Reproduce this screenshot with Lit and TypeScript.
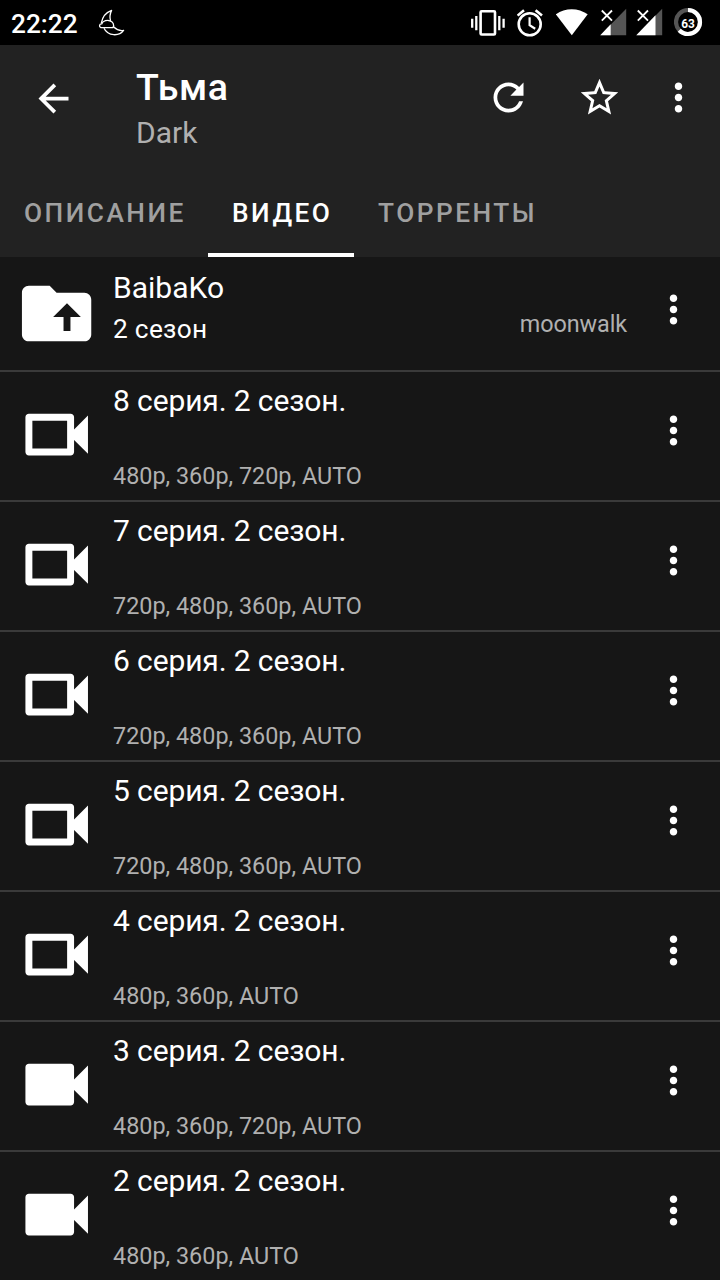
import { LitElement, html, svg, css } from "lit";
import { customElement, property } from "lit/decorators.js";

const GLYPHS: Record<string, string> = {
  back: "M20 11H7.83l5.59-5.59L12 4l-8 8 8 8 1.41-1.41L7.83 13H20v-2z",
  refresh:
    "M17.65 6.35C16.2 4.9 14.21 4 12 4c-4.42 0-7.99 3.58-7.99 8s3.57 8 7.99 8c3.73 0 6.84-2.55 7.73-6h-2.08c-.82 2.33-3.04 4-5.65 4-3.31 0-6-2.69-6-6s2.69-6 6-6c1.66 0 3.14.69 4.22 1.78L13 11h7V4l-2.35 2.35z",
  star: "M22 9.24l-7.19-.62L12 2 9.19 8.63 2 9.24l5.46 4.73L5.82 21 12 17.27 18.18 21l-1.63-7.03L22 9.24zM12 15.4l-3.76 2.27 1-4.28-3.32-2.88 4.38-.38L12 6.1l1.71 4.04 4.38.38-3.32 2.88 1 4.28L12 15.4z",
  more: "M12 8c1.1 0 2-.9 2-2s-.9-2-2-2-2 .9-2 2 .9 2 2 2zm0 2c-1.1 0-2 .9-2 2s.9 2 2 2 2-.9 2-2-.9-2-2-2zm0 6c-1.1 0-2 .9-2 2s.9 2 2 2 2-.9 2-2-.9-2-2-2z",
  folderUp:
    "M20 6h-8l-2-2H4c-1.1 0-2 .9-2 2v12c0 1.1.9 2 2 2h16c1.1 0 2-.9 2-2V8c0-1.1-.9-2-2-2zM16 13v4h-2v-4h-3l4-4 4 4h-3z",
  cam: "M17 10.5V7c0-.55-.45-1-1-1H4c-.55 0-1 .45-1 1v10c0 .55.45 1 1 1h12c.55 0 1-.45 1-1v-3.5l4 4v-11l-4 4z",
  camOutline:
    "M15 8v8H5V8h10m1-2H4c-.55 0-1 .45-1 1v10c0 .55.45 1 1 1h12c.55 0 1-.45 1-1v-3.5l4 4v-11l-4 4V7c0-.55-.45-1-1-1z",
};

@customElement("ui-icon")
export class UiIcon extends LitElement {
  @property() name = "more";
  static styles = css`
    :host { display: block; flex: none; width: 45px; height: 45px; }
    svg { display: block; width: 100%; height: 100%; fill: #fff; }
  `;
  render() {
    return html`<svg viewBox="0 0 24 24"><path fill-rule="evenodd" d=${GLYPHS[this.name]}></path></svg>`;
  }
}

@customElement("status-bar")
export class StatusBar extends LitElement {
  static styles = css`
    :host { display: flex; height: 45px; background: #000; color: #fff; }
    .clock { padding: 8px 0 0 11px; width: 97px; box-sizing: border-box; font-size: 26.25px; line-height: 32px; font-weight: 500; white-space: nowrap; }
    .space { flex: 1; }
    svg { display: block; flex: none; height: 45px; }
    .line { fill: none; stroke: #fff; }
    .num { font: 700 13px Roboto, sans-serif; fill: #fff; }
  `;
  private signal(w: number) {
    return svg`
      <path d="M0.3 35.2H26.2V8.8z" fill="#555"></path>
      <path d="M0.3 35.2H${w}V${35.2 - w * 1.02}z" fill="#fff"></path>
      <path class="line" stroke-width="1.8" d="M1.8 10.5l10.2 10.2M12 10.5l-10.2 10.2"></path>`;
  }
  render() {
    return html`
      <div class="clock">22:22</div>
      <svg width="30" viewBox="97 0 30 45">
        <g class="line" stroke-width="1.3" stroke-linejoin="round">
          <path d="M101.3 23.2C102.3 17.5 105.6 12.6 111.6 10.4C109.8 14 109.6 17.6 110.6 21.2"></path>
          <path d="M104.3 27.7H100.9C98.7 26.6 99.3 23.6 101.8 23.9C102.6 20.6 108 19.6 109.8 20.9C113 21.4 114.6 25 113 27.7H104"></path>
          <path d="M104 28.3C108 36.6 119.4 36.4 123.6 30.4C119.6 31.2 116.6 29.8 113.4 26.8"></path>
        </g>
      </svg>
      <div class="space"></div>
      <svg width="47" viewBox="470 0 47 45">
        <rect class="line" x="480.6" y="11.3" width="14.4" height="23.2" rx="1" stroke-width="2.6"></rect>
        <path class="line" stroke-width="2.3" d="M472.2 18.7v9M476.3 16v14.2M499.3 16v14.2M503.6 18.7v9"></path>
      </svg>
      <svg width="39" viewBox="517 0 39 45">
        <circle class="line" cx="529.7" cy="24.3" r="11" stroke-width="2.6"></circle>
        <path class="line" stroke-width="2.2" d="M529.6 17.2v8l5.6 3.5"></path>
        <path class="line" stroke-width="2.6" d="M517.6 15.6l6.4-5.3M535.6 10.3l6.4 5.3"></path>
      </svg>
      <svg width="44" viewBox="556 0 44 45">
        <path fill="#fff" d="M555.8 14.3C565 7.4 578.4 7.4 587.7 14.3L571.8 35.2z"></path>
      </svg>
      <svg width="36" viewBox="0 0 36 45">${this.signal(10.7)}</svg>
      <svg width="38" viewBox="0 0 38 45">${this.signal(19.5)}</svg>
      <svg width="46" viewBox="674 0 46 45">
        <circle cx="688" cy="22" r="12" fill="none" stroke="#555" stroke-width="4.2"></circle>
        <circle cx="688" cy="22" r="12" fill="none" stroke="#fff" stroke-width="4.2" pathLength="100"
          stroke-dasharray="63 37" transform="rotate(-90 688 22)"></circle>
        <text class="num" x="681.3" y="27.7" textLength="13.6" lengthAdjust="spacingAndGlyphs">63</text>
      </svg>
    `;
  }
}

@customElement("video-row")
export class VideoRow extends LitElement {
  @property() heading = "";
  @property() quality = "";
  @property({ type: Boolean }) seen = false;
  static styles = css`
    :host { display: flex; height: 130px; box-sizing: border-box; border-bottom: 2px solid #3a3a3a; }
    .cam { width: 83.4px; height: 83.4px; margin: 20.6px 0 0 14.6px; }
    .body { flex: 1; padding: 11px 0 0 15px; display: flex; flex-direction: column; gap: 43px; white-space: nowrap; }
    .heading { font-size: 30px; line-height: 36px; letter-spacing: -0.12px; color: #fff; }
    .quality { font-size: 23.4px; line-height: 28px; color: #b0b0b0; }
    .more { margin: 36px 24px 0 0; }
  `;
  render() {
    return html`
      <ui-icon class="cam" name=${this.seen ? "cam" : "camOutline"}></ui-icon>
      <div class="body">
        <div class="heading">${this.heading}</div>
        <div class="quality">${this.quality}</div>
      </div>
      <ui-icon class="more"></ui-icon>
    `;
  }
}

@customElement("app-root")
export class AppRoot extends LitElement {
  static styles = css`
    :host { display: flex; flex-direction: column; width: 720px; height: 1280px; overflow: hidden; background: #161616; color: #fff; font-family: Roboto, sans-serif; }
    status-bar, header, .folder, video-row { flex: none; }
    header { height: 212px; background: #222; display: flex; flex-direction: column; }
    .bar { height: 122px; display: flex; }
    .back { margin: 31px 0 0 31px; }
    .titles { flex: 1; padding: 20px 0 0 60px; display: flex; flex-direction: column; gap: 6px; white-space: nowrap; }
    .title { font-size: 37.5px; line-height: 44px; font-weight: 500; letter-spacing: 0.6px; }
    .sub { font-size: 30px; line-height: 36px; color: #b0b0b0; }
    .actions { display: flex; padding: 30px 19px 0 0; }
    .star { margin: 0 34px 0 46px; }
    .tabs { height: 90px; display: flex; }
    .tab { box-sizing: border-box; padding: 30px 0 0 24px; font-size: 26.25px; line-height: 32px; font-weight: 500; letter-spacing: 2.5px; color: #a0a0a0; white-space: nowrap; }
    .first { width: 208px; }
    .on { width: 146px; color: #fff; border-bottom: 4px solid #fff; }
    .folder { display: flex; height: 115px; box-sizing: border-box; border-bottom: 2px solid #3a3a3a; }
    .dir { width: 83.2px; height: 83.2px; margin: 14.8px 0 0 14.8px; }
    .names { flex: 1; padding: 12.5px 0 0 15px; display: flex; flex-direction: column; gap: 7px; }
    .name { font-size: 30px; line-height: 36px; }
    .season { font-size: 26.25px; line-height: 32px; letter-spacing: 0.3px; }
    .source { padding-top: 53px; margin-right: 24px; font-size: 23.4px; line-height: 28px; letter-spacing: -0.1px; color: #b0b0b0; }
    .more { margin: 30px 24px 0 0; }
  `;
  private rows: [string, string, boolean][] = [
    ["8 серия. 2 сезон.", "480p, 360p, 720p, AUTO", false],
    ["7 серия. 2 сезон.", "720p, 480p, 360p, AUTO", false],
    ["6 серия. 2 сезон.", "720p, 480p, 360p, AUTO", false],
    ["5 серия. 2 сезон.", "720p, 480p, 360p, AUTO", false],
    ["4 серия. 2 сезон.", "480p, 360p, AUTO", false],
    ["3 серия. 2 сезон.", "480p, 360p, 720p, AUTO", true],
    ["2 серия. 2 сезон.", "480p, 360p, AUTO", true],
  ];
  render() {
    return html`
      <status-bar></status-bar>
      <header>
        <div class="bar">
          <ui-icon class="back" name="back"></ui-icon>
          <div class="titles">
            <div class="title">Тьма</div>
            <div class="sub">Dark</div>
          </div>
          <div class="actions">
            <ui-icon name="refresh"></ui-icon>
            <ui-icon class="star" name="star"></ui-icon>
            <ui-icon></ui-icon>
          </div>
        </div>
        <div class="tabs">
          <div class="tab first">ОПИСАНИЕ</div>
          <div class="tab on">ВИДЕО</div>
          <div class="tab">ТОРРЕНТЫ</div>
        </div>
      </header>
      <div class="folder">
        <ui-icon class="dir" name="folderUp"></ui-icon>
        <div class="names">
          <div class="name">BaibaKo</div>
          <div class="season">2 сезон</div>
        </div>
        <div class="source">moonwalk</div>
        <ui-icon class="more"></ui-icon>
      </div>
      ${this.rows.map(
        ([h, q, s]) => html`<video-row .heading=${h} .quality=${q} .seen=${s}></video-row>`
      )}
    `;
  }
}
